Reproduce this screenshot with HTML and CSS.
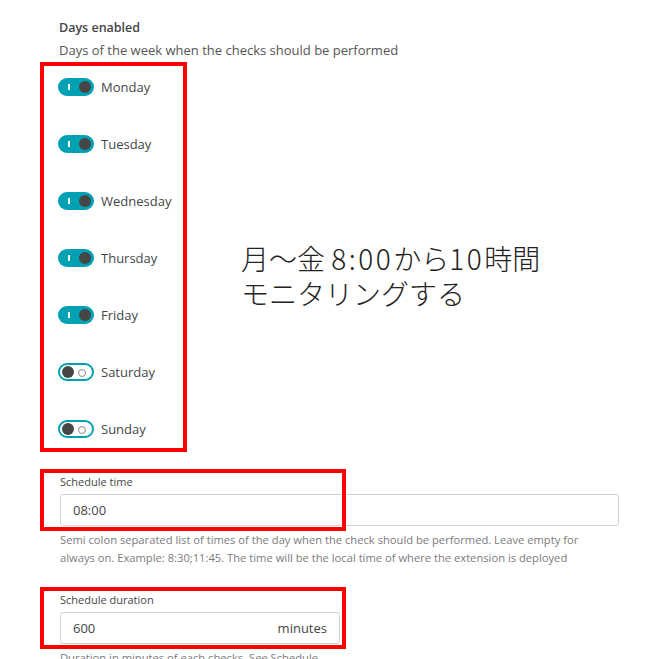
FILE: index.html
```html
<!DOCTYPE html>
<html lang="ja">
<head>
<meta charset="utf-8">
<link rel="stylesheet" href="styles.css">
</head>
<body>
<main class="page">
  <section class="days">
    <h3 class="field-title">Days enabled</h3>
    <p class="field-desc">Days of the week when the checks should be performed</p>
    <div class="days-row">
      <div class="days-box">
        <label class="day"><span class="toggle on"><span class="knob"></span></span><span class="day-name">Monday</span></label>
        <label class="day"><span class="toggle on"><span class="knob"></span></span><span class="day-name">Tuesday</span></label>
        <label class="day"><span class="toggle on"><span class="knob"></span></span><span class="day-name">Wednesday</span></label>
        <label class="day"><span class="toggle on"><span class="knob"></span></span><span class="day-name">Thursday</span></label>
        <label class="day"><span class="toggle on"><span class="knob"></span></span><span class="day-name">Friday</span></label>
        <label class="day"><span class="toggle off"><span class="knob"></span></span><span class="day-name">Saturday</span></label>
        <label class="day"><span class="toggle off"><span class="knob"></span></span><span class="day-name">Sunday</span></label>
      </div>
      <p class="note"><span class="note-line">月～金 <span class="num">8:00</span>から<span class="num">10</span>時間</span><span class="note-line">モニタリングする</span></p>
    </div>
  </section>

  <section class="field field-time">
    <div class="mark"></div>
    <div class="field-label">Schedule time</div>
    <div class="input input-wide"><span class="value">08:00</span></div>
    <p class="help">Semi colon separated list of times of the day when the check should be performed. Leave empty for always on. Example: 8:30;11:45. The time will be the local time of where the extension is deployed</p>
  </section>

  <section class="field field-duration">
    <div class="mark"></div>
    <div class="field-label">Schedule duration</div>
    <div class="input input-short"><span class="value">600</span><span class="unit">minutes</span></div>
    <p class="help">Duration in minutes of each checks. See Schedule</p>
  </section>
</main>
</body>
</html>
```

FILE: styles.css
```css
* { box-sizing: border-box; }

html, body {
  margin: 0;
  padding: 0;
  background: #ffffff;
}

body {
  font-family: "Open Sans", "Liberation Sans", sans-serif;
  color: #454646;
  overflow: hidden;
  height: 659px;
}

.page {
  padding: 20px 0 0 40px;
}

.field-title {
  margin: 0 0 0 19px;
  font-size: 12.5px;
  font-weight: 600;
  line-height: 16px;
  color: #454646;
}

.field-desc {
  margin: 6px 0 0 19px;
  font-size: 13px;
  line-height: 16px;
  color: #555555;
}

.days-row {
  display: flex;
  align-items: flex-start;
  gap: 54px;
  margin-top: 4px;
}

.days-box {
  width: 147px;
  height: 390px;
  border: 4px solid #ff0000;
  padding: 12px 0 0 14px;
  display: flex;
  flex-direction: column;
  gap: 39px;
}

.day {
  display: flex;
  align-items: center;
  gap: 7px;
  height: 18px;
}

.day-name {
  font-size: 13px;
  line-height: 18px;
  color: #454646;
}

.toggle {
  position: relative;
  width: 36px;
  height: 18px;
  border-radius: 9px;
  flex: none;
}

.toggle.on {
  background: #00a1b2;
}

.toggle.on::before {
  content: "";
  position: absolute;
  left: 10px;
  top: 6px;
  width: 2px;
  height: 6px;
  background: #ffffff;
}

.toggle.on .knob {
  position: absolute;
  right: 3px;
  top: 3px;
  width: 12px;
  height: 12px;
  border-radius: 50%;
  background: #454646;
}

.toggle.off {
  background: #ffffff;
  border: 2px solid #00a1b2;
}

.toggle.off .knob {
  position: absolute;
  left: 2px;
  top: 1px;
  width: 12px;
  height: 12px;
  border-radius: 50%;
  background: #454646;
}

.toggle.off::after {
  content: "";
  position: absolute;
  right: 6px;
  top: 4px;
  width: 6px;
  height: 6px;
  border-radius: 50%;
  border: 1.5px solid #8a8a8a;
}

.note {
  margin: 179px 0 0 0;
  font-family: "Noto Sans CJK JP", sans-serif;
  font-weight: 300;
  font-size: 28px;
  line-height: 35px;
  color: #222222;
  white-space: nowrap;
}

.note-line {
  display: block;
  height: 35px;
}

.num {
  letter-spacing: 2.5px;
}

.field {
  position: relative;
  padding: 0 0 0 20px;
  width: 599px;
}

.field-time {
  margin-top: 17px;
  padding-top: 6px;
}

.field-duration {
  margin-top: 20px;
  padding-top: 6px;
}

.mark {
  position: absolute;
  left: 0;
  top: 0;
  width: 306px;
  height: 62px;
  border: 4px solid #ff0000;
  pointer-events: none;
}

.field-label {
  font-size: 11px;
  line-height: 14px;
  color: #454646;
}

.input {
  display: flex;
  align-items: center;
  justify-content: space-between;
  height: 32px;
  margin-top: 5px;
  padding: 0 12px;
  border: 1px solid #d2d2d2;
  border-radius: 3px;
  background: #ffffff;
  font-size: 13px;
  color: #454646;
}

.input-wide {
  width: 559px;
}

.input-short {
  width: 280px;
}

.help {
  margin: 5px 0 0 0;
  font-size: 11.2px;
  line-height: 18px;
  color: #7c7c7c;
  width: 540px;
}
```
